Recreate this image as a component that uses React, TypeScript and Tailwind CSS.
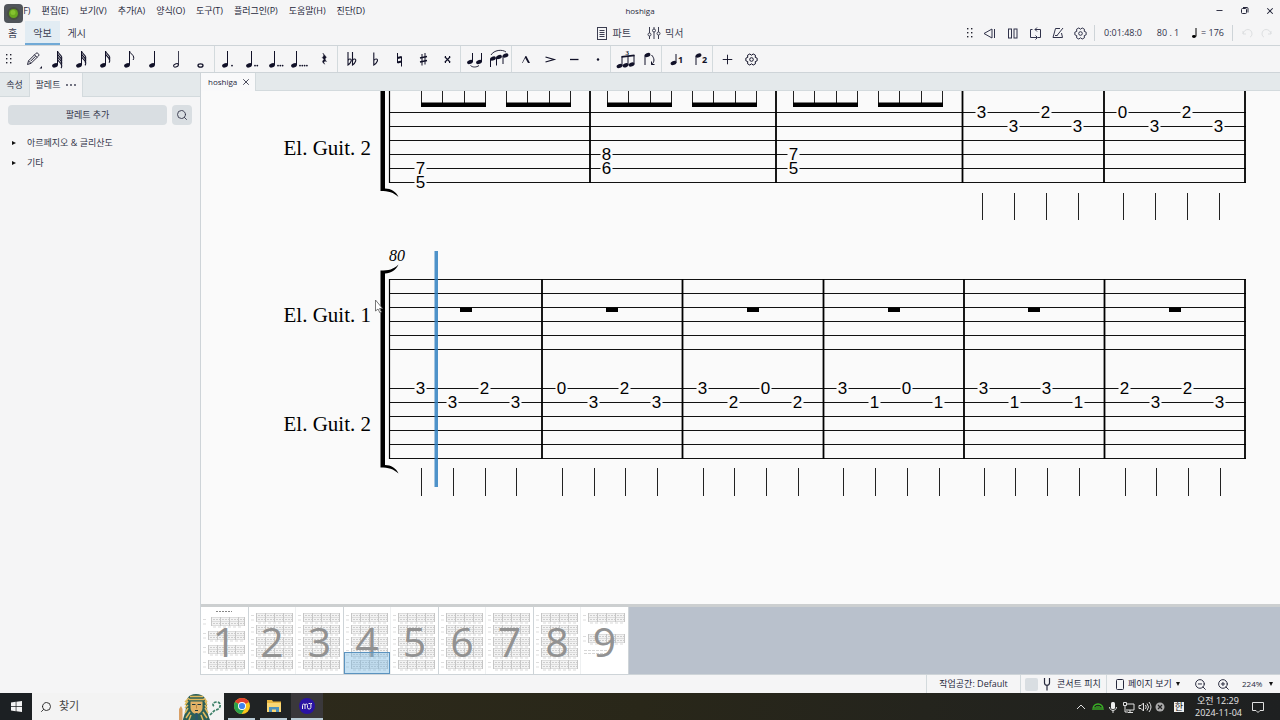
import React from "react";
import { clsx } from "clsx";
import { Minus, Plus, Search, X, ZoomIn, ZoomOut } from "lucide-react";

const MENUS = ["파일(F)", "편집(E)", "보기(V)", "추가(A)", "양식(O)", "도구(T)", "플러그인(P)", "도움말(H)", "진단(D)"];

/* ---------- small drawing helpers ---------- */

function Glyph({ children, size = 24 }: { children: React.ReactNode; size?: number }) {
  return (
    <svg width={size} height={size} viewBox={`0 0 ${size} ${size}`} fill="none" stroke="currentColor" aria-hidden="true" className="block">
      {children}
    </svg>
  );
}

function Head({ x, y, hollow }: { x: number; y: number; hollow?: boolean }) {
  return (
    <ellipse
      cx={x}
      cy={y}
      rx={hollow ? 2.5 : 3}
      ry={hollow ? 1.5 : 2}
      transform={`rotate(-24 ${x} ${y})`}
      fill={hollow ? "none" : "currentColor"}
      strokeWidth={hollow ? 1 : 0}
    />
  );
}

function Note({ x = 9, flags = 0, dots = 0, hollow }: { x?: number; flags?: number; dots?: number; hollow?: boolean }) {
  const stem = x + 2.5;
  return (
    <Glyph>
      <Head x={x} y={18.4} hollow={hollow} />
      <path d={`M${stem} 4V18`} strokeWidth={hollow ? 0.8 : 1} />
      {Array.from({ length: flags }, (_, i) => {
        const top = 4 + i * 2.7;
        return (
          <path
            key={i}
            d={`M${stem} ${top}c.5 2.6 3.6 3.4 4.2 6 .2 1.1-.1 2.2-.6 3`}
            strokeWidth={flags === 1 ? 1 : 1.1}
          />
        );
      })}
      {Array.from({ length: dots }, (_, i) => (
        <circle key={i} cx={x + (dots === 1 ? 7 : 6) + i * 2.3} cy={18.6} r={0.9} fill="currentColor" stroke="none" />
      ))}
    </Glyph>
  );
}

function Grip() {
  return (
    <svg width="8" height="12" viewBox="0 0 8 12" fill="#22222f" aria-hidden="true">
      {[1, 5, 9].map((y) => (
        <React.Fragment key={y}>
          <rect x="1" y={y} width="1.4" height="1.4" />
          <rect x="5" y={y} width="1.4" height="1.4" />
        </React.Fragment>
      ))}
    </svg>
  );
}

// six rounded teeth, two of them on the horizontal axis
const GEAR_POINTS = Array.from({ length: 6 }, (_, i) =>
  [
    [-13, 5.8],
    [13, 5.8],
    [30, 4.3],
  ].map(([deg, r]) => {
    const a = ((i * 60 + deg) * Math.PI) / 180;
    return `${(6.5 + r * Math.cos(a)).toFixed(2)},${(6.5 + r * Math.sin(a)).toFixed(2)}`;
  })
)
  .flat()
  .join(" ");

function Gear() {
  return (
    <svg width="13" height="13" viewBox="0 0 13 13" fill="none" stroke="currentColor" strokeLinejoin="round" aria-hidden="true">
      <polygon points={GEAR_POINTS} />
      <circle cx="6.5" cy="6.5" r="1.8" />
    </svg>
  );
}

function Caret() {
  return (
    <svg width="4" height="4" viewBox="0 0 4 4" fill="#111" aria-hidden="true">
      <path d="M0 0h4L2 4z" />
    </svg>
  );
}

/* ---------- note input toolbar ---------- */

type Tool = { label: string; icon: React.ReactNode };

const TOOL_GROUPS: Tool[][] = [
  [
    {
      label: "음표 입력",
      icon: (
        <Glyph>
          <path d="M5.5 17.500l1-3.700 7.500-7.500c1.500-1 3.700 1 2.500 2.700l-7.500 7.300zM12.500 7.800l2.500 2.500M6.700 14l2.200 2.200M8.500 14.300l5-5" strokeWidth="0.9" />
          <path d="M20 19v2.500h-2.500z" fill="currentColor" stroke="none" />
        </Glyph>
      ),
    },
    { label: "64분음표", icon: <Note flags={4} /> },
    { label: "32분음표", icon: <Note flags={3} /> },
    { label: "16분음표", icon: <Note flags={2} /> },
    { label: "8분음표", icon: <Note flags={1} /> },
    { label: "4분음표", icon: <Note x={10} /> },
    { label: "2분음표", icon: <Note x={10} hollow /> },
    {
      label: "온음표",
      icon: (
        <Glyph>
          <ellipse cx="10.5" cy="18.5" rx="2.5" ry="1.7" strokeWidth="1.3" />
        </Glyph>
      ),
    },
  ],
  [
    { label: "점음표", icon: <Note dots={1} x={8} /> },
    { label: "겹점음표", icon: <Note dots={2} x={8} /> },
    { label: "세겹점음표", icon: <Note dots={3} x={7} /> },
    { label: "네겹점음표", icon: <Note dots={4} x={5} /> },
    {
      label: "쉼표",
      icon: (
        <Glyph>
          <path d="M9.800 6l3.600 4.200c-1.700 1.300-1.600 2.500.2 4.300-2.600-.8-3.700.6-1.700 2.700-3.200-1.700-2.700-4.300-.6-4.200l-2-2.500c1.800-1.500 1.700-2.600.5-4.500z" fill="currentColor" strokeWidth="0.4" />
        </Glyph>
      ),
    },
  ],
  [
    {
      label: "겹내림표",
      icon: (
        <Glyph>
          <path d="M8 5v13c3-2 4.500-6 2-6-1 0-2 1-2 2M12.500 5v13c3-2 4.500-6 2-6-1 0-2 1-2 2" strokeWidth="1.1" />
        </Glyph>
      ),
    },
    {
      label: "내림표",
      icon: (
        <Glyph>
          <path d="M9.800 5.500v12.500c3.400-2 5-6 2.400-6-1.100 0-2.400 1-2.400 2" strokeWidth="1.1" />
        </Glyph>
      ),
    },
    {
      label: "제자리표",
      icon: (
        <Glyph>
          <path d="M9.500 6v10M13.500 9.500v10" />
          <path d="M9.500 11l4-1M9.500 15.500l4-1" strokeWidth="2" />
        </Glyph>
      ),
    },
    {
      label: "올림표",
      icon: (
        <Glyph>
          <path d="M10 7v11.500M13 6v11.500" />
          <path d="M8 11l7-1.500M8 15l7-1.500" strokeWidth="1.7" />
        </Glyph>
      ),
    },
    {
      label: "겹올림표",
      icon: (
        <Glyph>
          <path d="M9 10l5 5M14 10l-5 5" strokeWidth="1.2" />
          <path d="M8.800 9.800h1.200M13 9.800h1.200M8.800 15.200h1.200M13 15.200h1.200" strokeWidth="1.8" />
        </Glyph>
      ),
    },
  ],
  [
    {
      label: "붙임줄",
      icon: (
        <Glyph>
          <Head x={7} y={15} />
          <Head x={16} y={15} />
          <path d="M9.500 6v9M18.500 6v9" />
          <path d="M7.500 18.500c2 2 6 2 8.500 0" strokeWidth="0.9" />
        </Glyph>
      ),
    },
    {
      label: "이음줄",
      icon: (
        <Glyph>
          <Head x={6} y={11.5} />
          <Head x={12} y={10} />
          <Head x={18.5} y={8.5} />
          <path d="M3.500 12v8M9.500 10.500v8M16 9v8" />
          <path d="M4 8c3-5 11-6 15-3" strokeWidth="0.9" />
        </Glyph>
      ),
    },
  ],
  [
    {
      label: "마르카토",
      icon: (
        <Glyph>
          <path d="M8 16l3.500-7h.8l3.700 7h-2l-2.800-5-2.600 5z" fill="currentColor" stroke="none" />
        </Glyph>
      ),
    },
    {
      label: "악센트",
      icon: (
        <Glyph>
          <path d="M7.500 10l8.500 2.500-8.500 2.500" strokeWidth="1.3" />
        </Glyph>
      ),
    },
    {
      label: "테누토",
      icon: (
        <Glyph>
          <path d="M8 12.500h8.500" strokeWidth="1.3" />
        </Glyph>
      ),
    },
    {
      label: "스타카토",
      icon: (
        <Glyph>
          <circle cx="12" cy="12.5" r="1.2" fill="currentColor" stroke="none" />
        </Glyph>
      ),
    },
  ],
  [
    {
      label: "잇단음표",
      icon: (
        <Glyph>
          <Head x={6.5} y={19} />
          <Head x={12.5} y={18.3} />
          <Head x={18.5} y={17.5} />
          <path d="M9 9.500v9.500M15 9v9M21 8v9.500" />
          <path d="M8.500 9.800l13-1.500" strokeWidth="1.8" />
          <text x="12.500" y="8" fontSize="7" fontFamily="Liberation Serif, serif" fontWeight="700" fill="currentColor" stroke="none">3</text>
        </Glyph>
      ),
    },
    {
      label: "기둥 뒤집기",
      icon: (
        <Glyph>
          <Head x={10.5} y={8} />
          <path d="M8 8.500v9.500" />
          <path d="M14.500 8c3 3 3.500 7 0 9.500M14.500 14.500v3h3" />
        </Glyph>
      ),
    },
  ],
  [
    {
      label: "성부 1",
      icon: (
        <Glyph>
          <Head x={9.5} y={16} />
          <path d="M12 7v9" />
          <text x="14" y="16" fontSize="9" fontFamily="Open Sans, sans-serif" fontWeight="700" fill="currentColor" stroke="none">1</text>
        </Glyph>
      ),
    },
    {
      label: "성부 2",
      icon: (
        <Glyph>
          <Head x={10.5} y={8.5} />
          <path d="M8 9v9" />
          <text x="14" y="16" fontSize="9" fontFamily="Open Sans, sans-serif" fontWeight="700" fill="currentColor" stroke="none">2</text>
        </Glyph>
      ),
    },
  ],
  [
    { label: "추가", icon: <Plus size={15} strokeWidth={1.5} /> },
    { label: "도구 모음 설정", icon: <Gear /> },
  ],
];

function NoteToolbar() {
  return (
    <div role="toolbar" aria-label="음표 입력" className="flex h-7 items-center border-y border-[#ced4d8] pl-[5px] text-[#111128]">
      <div className="flex w-[17px]">
        <Grip />
      </div>
      {TOOL_GROUPS.map((group, g) => (
        <React.Fragment key={g}>
          {g > 0 && <div className="h-full w-[3px] border-l border-[#d3dadd]" />}
          {group.map((tool) => (
            <button key={tool.label} type="button" aria-label={tool.label} className="flex size-6 items-center justify-center hover:bg-slate-200">
              {tool.icon}
            </button>
          ))}
        </React.Fragment>
      ))}
    </div>
  );
}

/* ---------- header ---------- */

function TitleBar() {
  return (
    <header className="relative grid h-[21px] grid-cols-[1fr_auto_1fr] items-center text-[9px]">
      <nav className="flex gap-[11px] pl-1" aria-label="메뉴">
        {MENUS.map((m) => (
          <button key={m} type="button" className="whitespace-nowrap">
            {m}
          </button>
        ))}
      </nav>
      <h1 className="text-[8px]">hoshiga</h1>
      <div className="flex items-center justify-end gap-4 pr-[5px]">
        <button type="button" aria-label="최소화">
          <Minus size={9} strokeWidth={2.5} />
        </button>
        <button type="button" aria-label="이전 크기로">
          <svg width="9" height="9" viewBox="0 0 9 9" fill="none" stroke="currentColor" className="block">
            <rect x="1.5" y="2.5" width="5" height="5" rx="1" />
            <path d="M3 1.500h4q1 0 1 1v4" />
          </svg>
        </button>
        <button type="button" aria-label="닫기">
          <X size={10} strokeWidth={2.5} />
        </button>
      </div>
      <div className="absolute left-1 top-1 z-10 flex size-[19px] items-center justify-center rounded bg-[#50545a]">
        <svg width="13" height="13" viewBox="0 0 13 13" aria-hidden="true">
          <circle cx="6.5" cy="6.5" r="6.5" fill="#485040" />
          <circle cx="6.5" cy="6.5" r="4.5" fill="#69a81f" />
          <circle cx="6" cy="5.5" r="2.500" fill="#86c22f" />
        </svg>
      </div>
    </header>
  );
}

function PageTabs() {
  return (
    <div className="grid h-6 grid-cols-[1fr_auto_1fr] items-center text-[10px] text-[#3b3d50]">
      <div className="flex h-full">
        {["홈", "악보", "게시"].map((t) => (
          <button
            key={t}
            type="button"
            className={clsx("h-full border-b-2 px-2 pt-0.5", t === "악보" ? "border-[#70a9d6] bg-[#e2ecf3]" : "border-transparent")}
          >
            {t}
          </button>
        ))}
      </div>
      <div className="flex items-center gap-4">
        <button type="button" className="flex items-center gap-1.5">
          <svg width="10" height="13" viewBox="0 0 10 13" fill="none" stroke="currentColor">
            <rect x=".5" y=".5" width="9" height="12" />
            <path d="M2.500 3.500h5M2.500 5.500h5M2.500 7.500h5M2.500 9.500h5" />
          </svg>
          파트
        </button>
        <button type="button" className="flex items-center gap-1">
          <svg width="14" height="12" viewBox="0 0 14 12" fill="none" stroke="currentColor">
            <path d="M2.500 0v6M2.500 9v3M7 0v2M7 5v7M11.500 0v5M11.500 8v4" />
            <circle cx="2.5" cy="7.5" r="1.5" />
            <circle cx="7" cy="3.5" r="1.5" />
            <circle cx="11.5" cy="6.5" r="1.5" />
          </svg>
          믹서
        </button>
      </div>
      <div className="flex items-center justify-end pr-2 text-[#30324a]">
        <div className="w-3">
          <Grip />
        </div>
        <button type="button" aria-label="되감기" className="flex w-[23px] justify-center">
          <svg width="13" height="11" viewBox="0 0 13 11" fill="none" stroke="currentColor">
            <path d="M9 1L1 5.500 9 10zM11.500 1v9" />
          </svg>
        </button>
        <button type="button" aria-label="일시 정지" className="flex w-[23px] justify-center">
          <svg width="10" height="11" viewBox="0 0 10 11" fill="none" stroke="currentColor">
            <rect x=".5" y="1" width="3" height="9" />
            <rect x="6" y="1" width="3" height="9" />
          </svg>
        </button>
        <button type="button" aria-label="반복" className="flex w-[23px] justify-center">
          <svg width="13" height="13" viewBox="0 0 13 13" fill="none" stroke="currentColor">
            <path d="M3.500 2.500h-2v8H8M9 10.500h2.500v-8H6M8 .5l-2 2 2 2M6.500 8.500l2 2-2 2" />
          </svg>
        </button>
        <button type="button" aria-label="메트로놈" className="flex w-[22px] justify-center">
          <svg width="12" height="12" viewBox="0 0 12 12" fill="none" stroke="currentColor">
            <path d="M8 1.500H3.500L1 10.500h9.500L9.500 6M5 8.500L11 1M3 8.500h2.500" />
          </svg>
        </button>
        <button type="button" aria-label="재생 설정" className="flex w-[22px] justify-center">
          <Gear />
        </button>
        <div className="mx-[3px] h-4 w-px bg-[#ced4d8]" />
        <output className="w-[50px] text-center text-[9px]">0:01:48:0</output>
        <output className="w-10 text-center text-[9px]">80 . 1</output>
        <div className="flex w-9 items-center justify-end gap-1 whitespace-nowrap text-[9px]">
          <svg width="5" height="10" viewBox="0 0 5 10" aria-hidden="true" className="text-black">
            <ellipse cx="2" cy="8.5" rx="2" ry="1.4" fill="currentColor" />
            <path d="M4 0v8.500" stroke="currentColor" />
          </svg>
          = 176
        </div>
        <div className="ml-2 mr-[9px] h-4 w-px bg-[#ced4d8]" />
        <div className="flex gap-2 text-[#dddfe1]">
          <button type="button" disabled aria-label="실행 취소">
            <svg width="11" height="10" viewBox="0 0 11 10" fill="none" stroke="currentColor">
              <path d="M1 3v3h3M1 6c1-6 9-6 9 0 0 1-1 3-2 3" />
            </svg>
          </button>
          <button type="button" disabled aria-label="다시 실행">
            <svg width="11" height="10" viewBox="0 0 11 10" fill="none" stroke="currentColor">
              <path d="M10 3v3H7M10 6C9 0 1 0 1 6c0 1 1 3 2 3" />
            </svg>
          </button>
        </div>
      </div>
    </div>
  );
}

/* ---------- palettes ---------- */

function Sidebar() {
  return (
    <aside className="flex w-[201px] shrink-0 flex-col border-r border-[#ced4d8] text-[9px] text-[#33354a]">
      <div className="flex h-6 bg-[#e4e9eb]">
        <button type="button" className="w-[29px] border-b border-[#d3dadd]">
          속성
        </button>
        <button type="button" className="flex w-[54px] items-center justify-center gap-1.5 whitespace-nowrap border-x border-[#d3dadd] bg-[#f5f5f6]">
          팔레트
          <svg width="10" height="2" viewBox="0 0 10 2" fill="currentColor" aria-hidden="true">
            <circle cx="1" cy="1" r=".9" />
            <circle cx="5" cy="1" r=".9" />
            <circle cx="9" cy="1" r=".9" />
          </svg>
        </button>
        <div className="flex-1 border-b border-[#d3dadd]" />
      </div>
      <div className="flex gap-[5px] px-2 pt-2">
        <button type="button" className="h-5 flex-1 rounded-sm bg-[#d9dee2]">
          팔레트 추가
        </button>
        <button type="button" aria-label="검색" className="flex size-5 items-center justify-center rounded-sm bg-[#d9dee2]">
          <Search size={12} strokeWidth={1.8} />
        </button>
      </div>
      <ul className="pt-2">
        {["아르페지오 & 글리산도", "기타"].map((name) => (
          <li key={name}>
            <button type="button" className="flex h-5 w-full items-center gap-[11px] pl-3 text-left">
              <svg width="4" height="4" viewBox="0 0 4 4" fill="#111" aria-hidden="true">
                <path d="M0 0l4 2-4 2z" />
              </svg>
              {name}
            </button>
          </li>
        ))}
      </ul>
    </aside>
  );
}

/* ---------- score ---------- */

const STRING_GAP = 14;
const LEFT = 389;
const RIGHT = 1245;

function Tab({ x, top, string, fret }: { x: number; top: number; string: number; fret: number }) {
  const y = top + string * STRING_GAP;
  return (
    <>
      <rect x={x - 5.5} y={y - 6} width="12" height="12" fill="#fafafa" />
      <text x={x + 0.5} y={y + 5.5} textAnchor="middle" fontSize="17" fontFamily="Liberation Sans, Arial, sans-serif">
        {fret}
      </text>
    </>
  );
}

function Strings({ top }: { top: number }) {
  return (
    <path
      d={[0, 1, 2, 3, 4, 5].map((i) => `M${LEFT} ${top + i * STRING_GAP}H${RIGHT + 1}`).join("")}
      stroke="#111"
      strokeWidth="1.2"
    />
  );
}

function PartName({ y, children }: { y: number; children: string }) {
  return (
    <text x="371" y={y} textAnchor="end" fontSize="21" fontFamily="Liberation Serif, Times New Roman, serif">
      {children}
    </text>
  );
}

const BEAMS = [421, 506, 607, 692, 793, 878];
const UPPER_BARS = [590, 776, 962.5, 1104, RIGHT];
const LOWER_BARS = [542, 682.5, 823.5, 964, 1104.5, RIGHT];
const RESTS = [466, 612, 753, 894, 1034, 1175];

// [x, string, fret]
const UPPER_CHORDS = [
  [420, 4, 7], [420, 5, 5], [606, 3, 8], [606, 4, 6], [793, 3, 7], [793, 4, 5],
];
const UPPER_NOTES = [
  [981, 0, 3], [1013, 1, 3], [1045, 0, 2], [1077, 1, 3],
  [1122, 0, 0], [1154, 1, 3], [1186, 0, 2], [1218, 1, 3],
];
const LOWER_NOTES = [
  [420, 0, 3], [452, 1, 3], [484, 0, 2], [515, 1, 3],
  [561, 0, 0], [593, 1, 3], [624, 0, 2], [656, 1, 3],
  [702, 0, 3], [733, 1, 2], [765, 0, 0], [797, 1, 2],
  [842, 0, 3], [874, 1, 1], [906, 0, 0], [938, 1, 1],
  [983, 0, 3], [1014, 1, 1], [1046, 0, 3], [1078, 1, 1],
  [1124, 0, 2], [1155, 1, 3], [1187, 0, 2], [1219, 1, 3],
];

function Score() {
  return (
    <svg width="1079" height="513" viewBox="201 91 1079 513" className="block shrink-0" role="img" aria-label="hoshiga 악보">
      {/* upper system */}
      <path d={BEAMS.map((x) => [0, 21, 43, 64].map((d) => `M${x + d + 0.5} 90v15`).join("")).join("")} stroke="#222" />
      {BEAMS.map((x) => (
        <rect key={x} x={x} y="102.5" width="65" height="4.5" />
      ))}
      <Strings top={112.5} />
      <path d={UPPER_BARS.map((x) => `M${x} 90V183`).join("")} stroke="#000" strokeWidth="1.8" />
      <path d="M389.500 90V183" stroke="#000" strokeWidth="1.2" />
      <path d="M380.500 90h4.500v98.500c6 0 11 3 13.500 8.500-5-4.500-10-6-18-6z" />
      <PartName y={155}>El. Guit. 2</PartName>
      {[...UPPER_CHORDS, ...UPPER_NOTES].map(([x, string, fret]) => (
        <Tab key={`${x}-${string}`} x={x} top={112.5} string={string} fret={fret} />
      ))}
      <path d={UPPER_NOTES.map(([x]) => `M${x + 1.5} 193V220`).join("")} stroke="#222" />

      {/* lower system */}
      <text x="389" y="261" fontSize="16" fontStyle="italic" fontFamily="Liberation Serif, Times New Roman, serif">
        80
      </text>
      <Strings top={279.5} />
      <Strings top={388.5} />
      <path d={LOWER_BARS.map((x) => `M${x} 279V459`).join("")} stroke="#000" strokeWidth="1.8" />
      <path d="M389.500 279V459" stroke="#000" strokeWidth="1.2" />
      <path d="M380.500 270.500c8 0 13-1 18-6-2.500 5.500-7.500 8.500-13.500 9v191.500c6 0 11 3 13.500 8.500-5-4.500-10-6-18-6z" />
      {RESTS.map((x) => (
        <rect key={x} x={x - 6} y="307.5" width="12" height="4.5" />
      ))}
      <PartName y={322}>El. Guit. 1</PartName>
      <PartName y={431}>El. Guit. 2</PartName>
      {LOWER_NOTES.map(([x, string, fret]) => (
        <Tab key={x} x={x} top={388.5} string={string} fret={fret} />
      ))}
      <path d={LOWER_NOTES.map(([x]) => `M${x + 1.5} 468V496`).join("")} stroke="#222" />

      {/* playback cursor */}
      <rect x="434.5" y="251" width="3.5" height="236" fill="#2f7fbf" fillOpacity="0.85" />
      <path d="M375.500 300v11l2.500-2 2 4 1.500-1-2-3.500h3z" fill="#fff" stroke="#555" strokeWidth="0.8" />
    </svg>
  );
}

/* ---------- navigator ---------- */

const THUMB_ROWS = [6, 18, 30, 41, 53];

function Thumbnail({ page }: { page: number }) {
  let rows = THUMB_ROWS;
  if (page === 1) rows = [10, 24, 38, 53];
  if (page === 9) rows = [6, 27];
  return (
    <button
      type="button"
      aria-label={`${page}쪽`}
      className={clsx("relative h-full w-[47px] bg-white", page % 2 === 1 ? "mr-px" : "border-r border-[#eef0f1]")}
    >
      <svg width="46" height="67" viewBox="0 0 46 67" fill="none" aria-hidden="true" className="block">
        {page === 1 && <path d="M15 4.500h16" stroke="#888" strokeDasharray="2 1" />}
        {rows.map((y, i) => {
          const left = page === 1 && i === 0 ? 10 : 7;
          return (
            <g key={y}>
              <rect x={left} y={y + 0.5} width={44 - left} height="8" fill="#f3f3f3" />
              <path d={`M${left} ${y + 0.5}H44M${left} ${y + 4.5}H44M${left} ${y + 8.5}H44`} stroke="#dcdcdc" />
              <path d={`M${left + 2} ${y + 2.5}H44M${left + 2} ${y + 6.5}H44`} stroke="#cdcdcd" strokeDasharray="2 1" />
              <path d={`M${left + 0.5} ${y}v9M${left + 9.5} ${y}v9M${left + 18.5} ${y}v9M${left + 27.5} ${y}v9M43.500 ${y}v9`} stroke="#c6c6c6" />
              <path d={`M${left + 2} ${y + 10}H42`} stroke="#c8c8c8" strokeDasharray="3 2" strokeWidth="0.7" />
              <path d={`M2 ${y + 2.5}h3M2 ${y + 7}h3`} stroke="#ddd" />
            </g>
          );
        })}
        {page === 9 && <path d="M3 43.500h27M3 46.500h22" stroke="#ccc" strokeDasharray="3 1" strokeWidth="0.8" />}
      </svg>
      <span className="absolute inset-0 flex items-center justify-center pt-0.5 text-[41px] leading-none text-[#929292]">{page}</span>
      {page === 4 && <span className="absolute bottom-0 left-0 h-[22px] w-[46px] border border-[#5b93bf] bg-[#70b5e0]/40" />}
    </button>
  );
}

function Navigator() {
  return (
    <div className="flex h-[71px] shrink-0 border-b border-t-[3px] border-b-[#ced4d8] border-t-[#cccfd0] bg-[#b9c1cc]">
      <div className="flex bg-[#ced4d8]">
        {[1, 2, 3, 4, 5, 6, 7, 8, 9].map((p) => (
          <Thumbnail key={p} page={p} />
        ))}
      </div>
    </div>
  );
}

/* ---------- bottom bars ---------- */

function StatusBar() {
  return (
    <footer className="flex h-[18px] shrink-0 items-center justify-end text-[9px] text-[#26283c]">
      <button type="button" className="h-full w-[95px] border-x border-[#d3dadd]">
        작업공간: Default
      </button>
      <label className="flex h-full w-[86px] items-center border-r border-[#d3dadd] pl-1">
        <input type="checkbox" className="size-[13px] appearance-none rounded-xs bg-[#d9dee2] checked:bg-[#70afea]" />
        <svg width="8" height="13" viewBox="0 0 8 13" fill="none" stroke="currentColor" className="ml-[5px] mr-1.5" aria-hidden="true">
          <path d="M1.500 0v5c0 3 5 3 5 0V0M4 7v5.500" strokeWidth="1.2" />
        </svg>
        <span className="whitespace-nowrap">콘서트 피치</span>
      </label>
      <div className="flex items-center pl-[9px]">
        <svg width="8" height="11" viewBox="0 0 8 11" fill="none" stroke="currentColor" aria-hidden="true">
          <rect x=".5" y=".5" width="7" height="10" rx="1" />
        </svg>
        <select aria-label="보기 모드" className="ml-1 w-12 appearance-none bg-transparent">
          <option>페이지 보기</option>
        </select>
        <Caret />
      </div>
      <button type="button" aria-label="축소" className="ml-[14px]">
        <ZoomOut size={13} strokeWidth={1.8} />
      </button>
      <button type="button" aria-label="확대" className="ml-[10px]">
        <ZoomIn size={13} strokeWidth={1.8} />
      </button>
      <div className="ml-3 flex items-center pr-[7px]">
        <select aria-label="확대/축소" className="w-[27px] appearance-none bg-transparent text-[8px]">
          <option>224%</option>
        </select>
        <Caret />
      </div>
    </footer>
  );
}

function Pharaoh() {
  return (
    <svg width="46" height="27" viewBox="0 0 46 27" aria-hidden="true">
      <path d="M1 27V16l2-3 1.500 3v11z" fill="#d9a066" />
      <path d="M5 27c1-4 5-5 8-5v5z" fill="#2e8fb8" />
      <path d="M18 1C10 1 8 6 8 13c0 6-2 9-3 14h27c-2-5-3-8-3-14 0-7-3-12-11-12z" fill="#2c5f57" />
      <path d="M11 5L7 9M10 8l-3 4M10 12l-3 3M10 15l-3 5M12 19l-4 6M26 5l3 4M27 8l2 4M27 12l2 3M27 15l3 5M25 19l4 6M13 22l-2 5M23 22l2 5" stroke="#e3bb5c" strokeWidth="1.5" />
      <path d="M12 3.500h13M11 6.500h15" stroke="#e3bb5c" strokeWidth="1.5" />
      <path d="M12.500 8.500h12v6c0 4-3 6.500-6 6.500s-6-2.500-6-6.500z" fill="#e2b367" />
      <path d="M14 11.500h3.500M19.500 11.500H23M17 17.500h3" stroke="#22393a" strokeWidth="1.2" />
      <path d="M18.500 12v3.500" stroke="#b98440" />
      <path d="M18.500 20v7" stroke="#27566b" strokeWidth="2.5" />
      <path d="M32 22l5-5c6 0 7-8 2-8-4 0-5 3-3 4" fill="none" stroke="#3d8068" strokeWidth="1.7" strokeDasharray="3 1" />
    </svg>
  );
}

function Taskbar() {
  return (
    <div className="flex h-[27px] shrink-0 items-stretch bg-linear-to-r from-[#302c1d] via-[#292719] to-[#1e2021] text-[#e6e6e6]">
      <button type="button" aria-label="시작" className="flex w-8 items-center justify-center bg-[#1c2023]">
        <svg width="11" height="11" viewBox="0 0 11 11" fill="#f4f4f4">
          <path d="M0 1.500L4.700.8v4.400H0zM5.400.7L11 0v5.200H5.400zM0 5.900h4.700v4.400L0 9.600zM5.400 5.900H11V11l-5.600-.7z" />
        </svg>
      </button>
      <label className="flex w-48 items-center bg-[#f3f3f3] pl-2 text-[#222]">
        <Search size={12} strokeWidth={1.8} className="-scale-x-100" />
        <input type="text" placeholder="찾기" aria-label="찾기" className="ml-[7px] w-0 flex-1 bg-transparent text-[11px] placeholder:text-[#444]" />
        <Pharaoh />
      </label>
      <div className="flex bg-[#202324]">
        <button type="button" aria-label="Chrome" className="ml-1 flex w-[27px] items-center justify-center border-b-2 border-[#b9cbd5]">
          <svg width="16" height="16" viewBox="0 0 16 16">
            <circle cx="8" cy="8" r="8" fill="#f9c51c" />
            <path d="M8 8L1.100 4A8 8 0 0 1 14.900 4z" fill="#e2402e" />
            <path d="M8 8L1.100 4A8 8 0 0 0 7.500 16l3.700-6z" fill="#2ba24c" />
            <circle cx="8" cy="8" r="4" fill="#fff" />
            <circle cx="8" cy="8" r="3.1" fill="#3f83ee" />
          </svg>
        </button>
        <button type="button" aria-label="파일 탐색기" className="ml-[5px] flex w-[27px] items-center justify-center border-b-2 border-[#b9cbd5]">
          <svg width="16" height="14" viewBox="0 0 16 14">
            <path d="M1 1h5l1 1.500h8V12H1z" fill="#e9b640" />
            <path d="M1 4h14v9H1z" fill="#fad774" />
            <path d="M3 8h10v5h-3v-2.500H6V13H3z" fill="#4e91bd" />
          </svg>
        </button>
        <button type="button" aria-label="MuseScore" className="ml-1 flex w-8 items-center justify-center border-b-2 border-[#b9cbd5] bg-[#3a383b]">
          <svg width="16" height="16" viewBox="0 0 16 16" fill="none">
            <circle cx="8" cy="8" r="8" fill="#2a13a4" />
            <path d="M3.500 11V7.500q0-1.500 1.300-1.500T6 7.500V11M6 7.500Q6 6 7.300 6t1.200 1.500V9.500q0 1.500 1.700 1.500t1.700-1.500V5.500M9.500 5.500h1.500M11.500 5.500h1.500" stroke="#eee" />
          </svg>
        </button>
      </div>
      <div className="ml-auto flex items-center">
        <svg width="79" height="14" viewBox="0 0 79 14" fill="none" stroke="#e0e0e0" aria-hidden="true">
          <path d="M1 9l4-4 4 4" />
          <path d="M17 10c-1-8 11-8 10 0M19 10V7M21 10V6M23 10V6M25 10V7" stroke="#3bb526" strokeWidth="1.3" />
          <rect x="35" y="2" width="4" height="7" rx="1.5" fill="#eee" stroke="none" />
          <path d="M33.500 7c0 4.500 7 4.500 7 0M37 10v3" />
          <path d="M50 4h8v6h-8M52 12.500h5M54 10v2M47.500 2.500h3v3h-3zM49 6v6h3" />
          <path d="M63 5.500h2l2.500-2.500v8L65 8.500h-2zM69.500 5q1.500 2 0 4M71 3.500q3 3.500 0 7M73 2q4 5 0 10" />
        </svg>
        <svg width="10" height="10" viewBox="0 0 10 10" className="mr-[9px]" aria-hidden="true">
          <circle cx="5" cy="5" r="4.5" fill="#aaa" />
          <path d="M3 3l4 4M7 3L3 7" stroke="#222" strokeWidth="1.2" />
        </svg>
        <span className="flex size-[10px] items-center justify-center bg-[#eee] text-[9px] leading-none text-[#111]">한</span>
        <div className="ml-[11px] w-[46px] text-center text-[9px] leading-[12px]">
          <div>오전 12:29</div>
          <div className="whitespace-nowrap">2024-11-04</div>
        </div>
        <button type="button" aria-label="알림" className="ml-[11px] mr-4">
          <svg width="12" height="12" viewBox="0 0 12 12" fill="none" stroke="#e0e0e0">
            <path d="M.5 1.500h11v8H8L6 11.500 4 9.500H.5z" />
          </svg>
        </button>
      </div>
    </div>
  );
}

export default function App() {
  return (
    <div className="flex h-screen flex-col overflow-hidden bg-[#f5f5f6] font-['Open_Sans','Noto_Sans_CJK_KR',sans-serif] text-[#26283c]">
      <TitleBar />
      <PageTabs />
      <NoteToolbar />
      <div className="flex min-h-0 flex-1">
        <Sidebar />
        <main className="flex min-w-0 flex-1 flex-col">
          <div className="flex h-[18px] shrink-0 bg-[#e4e9eb] text-[8px]">
            <div className="flex items-center gap-1 border-r border-[#d3dadd] bg-[#f9f9fa] pl-[7px] pr-1">
              hoshiga
              <button type="button" aria-label="악보 닫기">
                <X size={10} strokeWidth={2} />
              </button>
            </div>
            <div className="flex-1 border-b border-[#d3dadd]" />
          </div>
          <div className="min-h-0 flex-1 overflow-hidden bg-[#fafafa]">
            <Score />
          </div>
          <Navigator />
        </main>
      </div>
      <StatusBar />
      <Taskbar />
    </div>
  );
}
